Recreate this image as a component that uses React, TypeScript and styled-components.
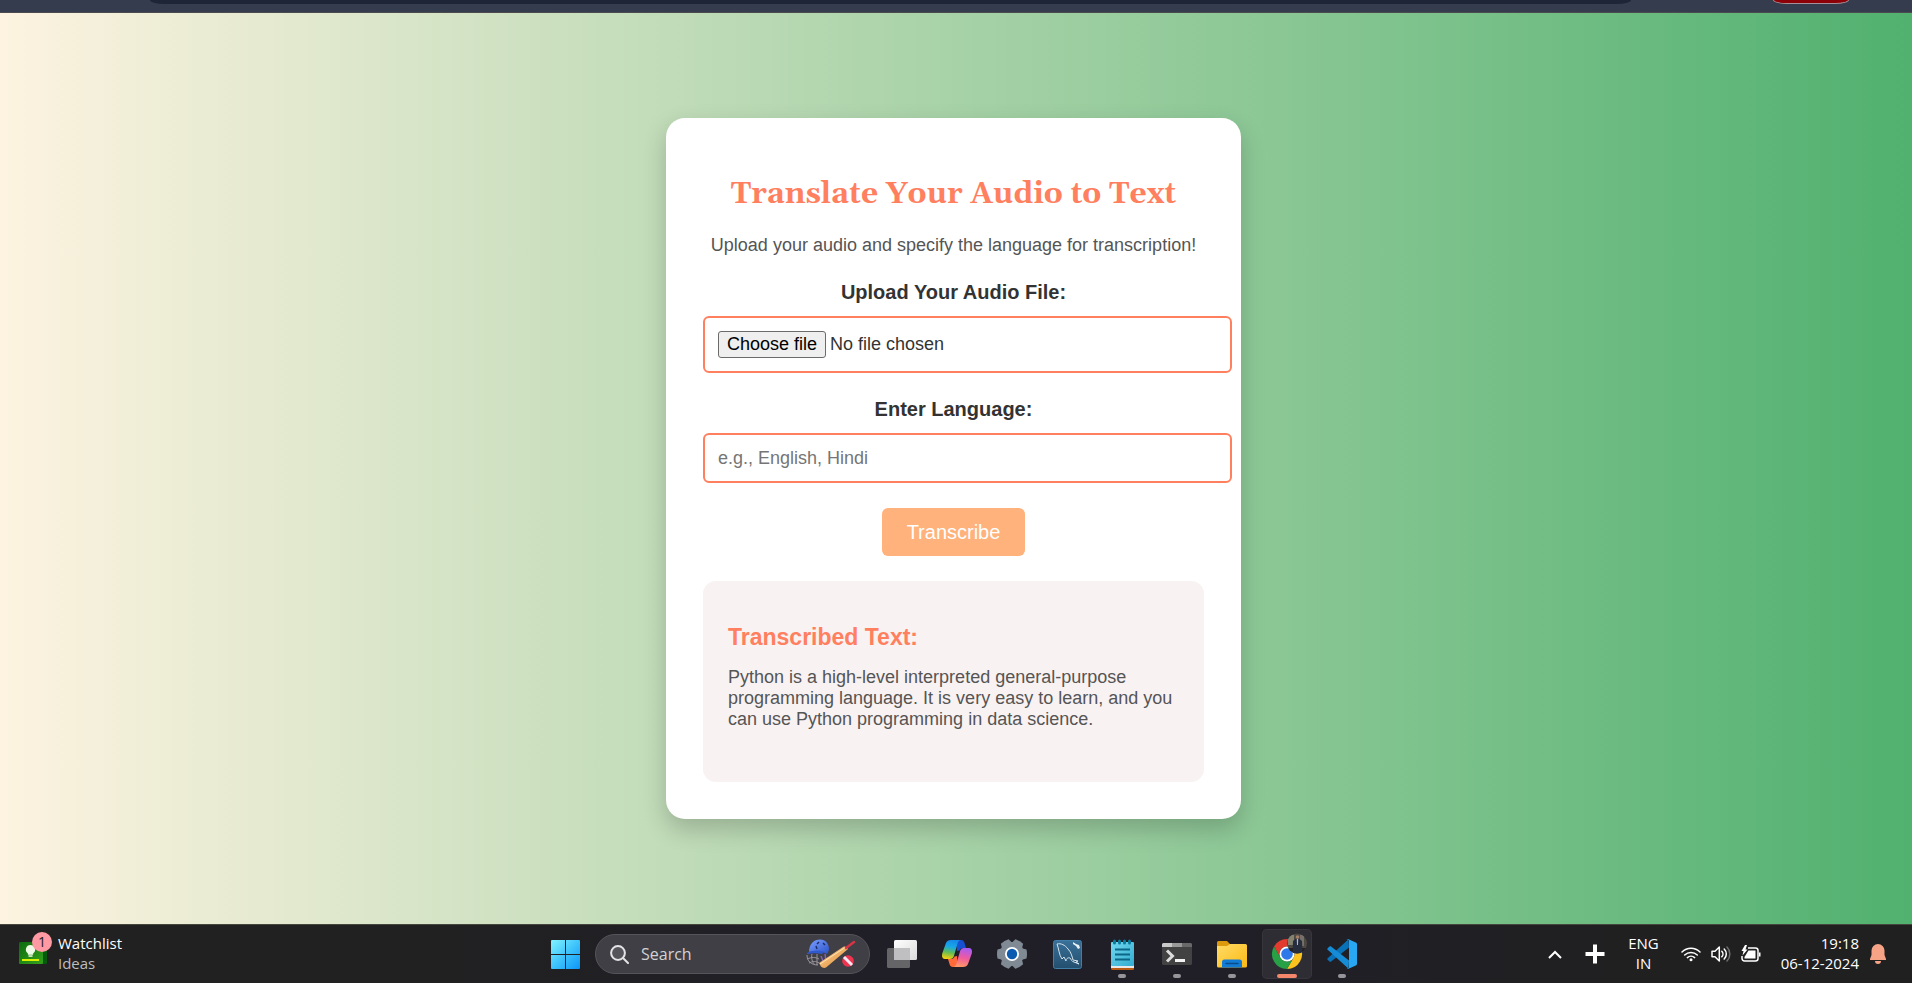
import React, { useRef, useState } from "react";
import styled, { createGlobalStyle } from "styled-components";

const GlobalStyle = createGlobalStyle`
  *, *::before, *::after { box-sizing: border-box; }
  body { margin: 0; font-family: "Liberation Sans", Arial, sans-serif; }
  h1, h2, p { margin: 0; }
  button, input { font-family: inherit; }
`;

const Screen = styled.div`
  display: flex;
  flex-direction: column;
  min-height: 100vh;
`;

/* ---------- browser chrome ---------- */

const BrowserBar = styled.div`
  display: flex;
  align-items: flex-start;
  height: 13px;
  padding: 0 63px 0 150px;
  background: #343c4e;
  border-bottom: 1px solid #4b4a4f;
`;

const AddressBar = styled.div`
  flex: 1;
  height: 4px;
  margin-right: 142px;
  background: #1d2536;
  border-radius: 0 0 14px 14px / 0 0 4px 4px;
`;

const UpdatePill = styled.div`
  width: 76px;
  height: 4px;
  background: #8c0007;
  border: 1px solid #a58f98;
  border-top: 0;
  border-radius: 0 0 14px 14px / 0 0 4px 4px;
`;

/* ---------- page ---------- */

const Page = styled.main`
  flex: 1;
  display: flex;
  align-items: center;
  justify-content: center;
  padding: 24px 5px 24px 0;
  background: linear-gradient(to right, #fdf3e0, #51b16f);
`;

const Card = styled.section`
  width: 575px;
  padding: 37px;
  background: #fff;
  border-radius: 19px;
  box-shadow: 0 10px 25px rgba(0, 0, 0, 0.2);
  text-align: center;
`;

const Title = styled.h1`
  margin: 22px 0 24px;
  color: #ff7f5f;
  font: bold 30px/34px Georgia, Gelasio, "Liberation Serif", serif;
  white-space: nowrap;
`;

const Intro = styled.p`
  margin-bottom: 24px;
  color: #555;
  font-size: 18px;
  line-height: 21px;
`;

const Form = styled.form`
  display: flex;
  flex-direction: column;
  align-items: center;
`;

const FieldLabel = styled.label`
  margin-bottom: 12px;
  color: #333;
  font-size: 20px;
  font-weight: bold;
  line-height: 24px;
`;

const fieldWidth = "calc(100% + 28px)";

const FileField = styled.div`
  display: flex;
  align-items: center;
  align-self: flex-start;
  gap: 4px;
  width: ${fieldWidth};
  margin-bottom: 24px;
  padding: 13px;
  border: 2px solid #ff7f5f;
  border-radius: 6px;
  color: #333;
  font-size: 18px;
  line-height: 21px;
`;

const HiddenFileInput = styled.input`
  display: none;
`;

const ChooseButton = styled.button`
  height: 27px;
  padding: 0 8px;
  background: #efefef;
  border: 1px solid #6b6b6b;
  border-radius: 3px;
  color: #000;
  font-size: 18px;
  line-height: 21px;
`;

const TextField = styled.input`
  align-self: flex-start;
  width: ${fieldWidth};
  height: 50px;
  margin-bottom: 25px;
  padding: 0 13px;
  background: #fff;
  border: 2px solid #ff7f5f;
  border-radius: 6px;
  color: #333;
  font-size: 18px;
  &::placeholder { color: #757575; }
`;

const SubmitButton = styled.button`
  height: 48px;
  margin-bottom: 25px;
  padding: 0 25px;
  background: #ffb27b;
  border: 0;
  border-radius: 6px;
  color: #fff;
  font-size: 20px;
`;

const Result = styled.section`
  min-height: 201px;
  padding: 25px;
  background: #f9f2f2;
  border-radius: 13px;
  text-align: left;
`;

const ResultTitle = styled.h2`
  margin: 18px 0 16px;
  color: #ff7f5f;
  font-size: 23px;
  line-height: 27px;
`;

const ResultText = styled.p`
  color: #555;
  font-size: 18px;
  line-height: 21px;
`;

/* ---------- taskbar ---------- */

const Taskbar = styled.footer`
  display: grid;
  grid-template-columns: 1fr auto 1fr;
  align-items: center;
  height: 59px;
  padding-right: 5px;
  background: linear-gradient(to right, #212121 20%, #201f27 45%, #201f27 65%, #202021 85%);
  border-top: 1px solid #45473f;
  color: #fff;
  font-family: "Segoe UI", "Open Sans", sans-serif;
  font-size: 15px;
  line-height: 20px;
`;

const BareButton = styled.button`
  display: flex;
  align-items: center;
  padding: 0;
  background: none;
  border: 0;
  color: inherit;
  font: inherit;
`;

const Widget = styled(BareButton)`
  justify-self: start;
  gap: 6px;
  margin-left: 18px;
  text-align: left;
`;

const Stack = styled.span`
  display: block;
  padding-bottom: 3px;
`;

const Muted = styled.span`
  display: block;
  color: #bdbdbd;
`;

const Line = styled.span`
  display: block;
`;

const Apps = styled.nav`
  display: flex;
  align-items: center;
  gap: 5px;
`;

const AppButton = styled(BareButton)<{ $active?: boolean; $running?: boolean }>`
  position: relative;
  justify-content: center;
  width: 50px;
  height: 50px;
  border-radius: 5px;
  background: ${(p) => (p.$active ? "#2e2d34" : "none")};
  box-shadow: ${(p) => (p.$active ? "inset 0 0 0 1px #37363c" : "none")};
  &::after {
    content: "";
    display: ${(p) => (p.$running ? "block" : "none")};
    position: absolute;
    bottom: 1px;
    left: 50%;
    transform: translateX(-50%);
    width: ${(p) => (p.$active ? "20px" : "8px")};
    height: 4px;
    border-radius: 2px;
    background: ${(p) => (p.$active ? "#f4866c" : "#96959a")};
  }
`;

const SearchBox = styled.label`
  display: flex;
  align-items: center;
  gap: 12px;
  width: 275px;
  height: 40px;
  margin-right: 2px;
  padding: 0 13px 0 14px;
  background: #403f45;
  border: 1px solid #55545a;
  border-radius: 20px;
`;

const SearchInput = styled.input`
  flex: 1;
  min-width: 0;
  padding: 0;
  background: none;
  border: 0;
  color: #fff;
  font-size: 16px;
  &::placeholder { color: #d2d2d4; opacity: 1; }
`;

const Tray = styled.div`
  display: flex;
  align-items: center;
  justify-self: end;
  margin-right: 21px;
`;

const TrayButton = styled(BareButton)<{ $gap: number }>`
  margin-right: ${(p) => p.$gap}px;
`;

const Language = styled(TrayButton)`
  text-align: center;
`;

const Clock = styled(TrayButton)`
  text-align: right;
`;

const Quick = styled(TrayButton)`
  gap: 10px;
`;

/* ---------- icons ---------- */

const WatchIcon = () => (
  <svg width="34" height="44" viewBox="0 2 34 44">
    <defs>
      <linearGradient id="wg" x1="0" y1="0" x2="1" y2="1">
        <stop offset="0" stopColor="#0c6a0f" />
        <stop offset="1" stopColor="#35a31c" />
      </linearGradient>
    </defs>
    <rect x="1" y="12" width="28" height="22" rx="1.5" fill="#075b0c" />
    <rect x="1" y="12" width="24" height="22" rx="1.5" fill="url(#wg)" />
    <rect x="4" y="29" width="17" height="2" fill="#d9f000" />
    <path d="M12.500 15a4.600 4.600 0 0 1 2.600 8.400v1.300h-5.200v-1.300a4.600 4.600 0 0 1 2.600-8.400z" fill="#effbe6" />
    <rect x="10.500" y="25.300" width="4" height="1.500" fill="#effbe6" />
    <circle cx="24" cy="12" r="10" fill="#ff99a4" />
    <text x="24" y="17" textAnchor="middle" fontSize="14" fill="#1b1b1b">1</text>
  </svg>
);

const WindowsIcon = () => (
  <svg width="29" height="29" viewBox="0 0 29 29">
    <defs>
      <linearGradient id="win" gradientUnits="userSpaceOnUse" x1="0" y1="0" x2="29" y2="29">
        <stop offset="0" stopColor="#82f3ff" />
        <stop offset="0.500" stopColor="#3fc4fb" />
        <stop offset="1" stopColor="#0c95f8" />
      </linearGradient>
    </defs>
    <path d="M1 0h13v14H0V1a1 1 0 0 1 1-1zM15 0h13a1 1 0 0 1 1 1v13H15zM0 15h14v14H1a1 1 0 0 1-1-1zM15 15h14v13a1 1 0 0 1-1 1H15z" fill="url(#win)" />
  </svg>
);

const SearchIcon = () => (
  <svg width="19" height="19" viewBox="0 0 19 19" fill="none" stroke="#e4e4e6" strokeWidth="2">
    <circle cx="8" cy="8" r="6.900" fill="#55545a" />
    <path d="M13 13l5 5" strokeLinecap="round" />
  </svg>
);

const CricketIcon = () => (
  <svg width="50" height="30" viewBox="0 0 50 30">
    <defs>
      <linearGradient id="helmet" x1="0" y1="0" x2="1" y2="1">
        <stop offset="0" stopColor="#7ca0ff" />
        <stop offset="1" stopColor="#2b52c9" />
      </linearGradient>
      <linearGradient id="bat" x1="0" y1="0" x2="1" y2="1">
        <stop offset="0" stopColor="#ffd391" />
        <stop offset="1" stopColor="#dd8c3b" />
      </linearGradient>
    </defs>
    <g fill="none" stroke="#99979d" strokeWidth="1">
      <path d="M1 16c0 6 4 10 11 10M1 20c5-2 8-2 12 0M3 24c4-2 7-2 10 0M6 15c-1 4 0 8 3 11M11 15v11" />
    </g>
    <path d="M3 13C3 5 8 0.500 14 0.500s9 4.500 9 10.500l-2 4-4-2c-5-1-10-1-14 0z" fill="url(#helmet)" />
    <path d="M1 14c6-3 12-3 17-1l-2 2c-5-1-9-1-15 0z" fill="#3159cf" />
    <path d="M11 5l2-2M10 7l1 3M17 4l2 2" stroke="#1c2f68" strokeWidth="1.500" />
    <path d="M19 15l1 7M15 17l2 5" stroke="#7f61bb" strokeWidth="1.500" />
    <path d="M13 24L37 8c2-1 4 0 5 2L20 28.500c-2 1-4 0-5-1z" fill="url(#bat)" />
    <path d="M14 25L39 8.500" stroke="#ffe4b4" strokeWidth="1" />
    <path d="M40 9l8-6" stroke="#d83446" strokeWidth="2.500" strokeLinecap="round" />
    <circle cx="42" cy="22" r="5.800" fill="#ee3450" />
    <path d="M38 18l8 8" stroke="#f6e7f0" strokeWidth="3" />
  </svg>
);

const TaskViewIcon = () => (
  <svg width="30" height="29" viewBox="0 0 30 29">
    <defs>
      <linearGradient id="tv" x1="0" y1="0" x2="1" y2="1">
        <stop offset="0" stopColor="#fff" />
        <stop offset="1" stopColor="#dadada" />
      </linearGradient>
    </defs>
    <rect x="0" y="8" width="23" height="20" rx="1.500" fill="#656567" />
    <rect x="7" y="0" width="23" height="20" rx="1.500" fill="url(#tv)" />
    <path d="M7 8h16v12H8.500A1.500 1.500 0 0 1 7 18.500z" fill="#bfbfc1" />
  </svg>
);

const CopilotIcon = () => (
  <svg width="30" height="28" viewBox="0 0 30 28">
    <defs>
      <linearGradient id="cpa" x1="0.500" y1="0" x2="0.300" y2="1">
        <stop offset="0" stopColor="#1689e8" />
        <stop offset="0.350" stopColor="#18a8e8" />
        <stop offset="0.650" stopColor="#62bd55" />
        <stop offset="1" stopColor="#f8d00f" />
      </linearGradient>
      <linearGradient id="cpb" x1="0.600" y1="0" x2="0.400" y2="1">
        <stop offset="0" stopColor="#a65cf5" />
        <stop offset="0.500" stopColor="#ee5aa0" />
        <stop offset="1" stopColor="#ff9866" />
      </linearGradient>
    </defs>
    <path d="M14 0h5c2 0 3 1 3.500 3L24 8h-3.500c-1.500 0-2.500 1-3 2.500L15 11z" fill="#1751d1" />
    <path d="M16 27h-5c-2 0-3-1-3.500-3L6 19h3.500c1.500 0 2.500-1 3-2.500L15 16z" fill="#ff6a3b" />
    <path d="M9 0h10c-2.200 0-3 2-3.600 4l-3.500 12c-.6 2-1.900 3-3.900 3H3c-3 0-3.500-3-2.600-6L4 3c.7-2 2.500-3 5-3z" fill="url(#cpa)" />
    <path d="M21 27H11c2.200 0 3-2 3.600-4l3.500-12c.6-2 1.900-3 3.900-3h5c3 0 3.500 3 2.600 6L26 24c-.7 2-2.500 3-5 3z" fill="url(#cpb)" />
  </svg>
);

const GearIcon = () => (
  <svg width="30" height="30" viewBox="-15 -15 30 30">
    <g fill="#808a94">
      <circle r="12" />
      {[0, 60, 120, 180, 240, 300].map((a) => (
        <path key={a} transform={`rotate(${a})`} d="M9 -6L14.500 -4.500Q15.500 0 14.500 4.500L9 6z" />
      ))}
    </g>
    <circle r="7" fill="#fff" />
    <circle r="5.200" fill="#0b5cb0" />
  </svg>
);

const DolphinIcon = () => (
  <svg width="29" height="29" viewBox="0 0 29 29">
    <defs>
      <linearGradient id="sql" x1="0" y1="0" x2="0" y2="1">
        <stop offset="0" stopColor="#3a7099" />
        <stop offset="1" stopColor="#234f6e" />
      </linearGradient>
    </defs>
    <rect x="0.500" y="0.500" width="28" height="28" rx="2" fill="url(#sql)" stroke="#3f7fa8" />
    <path d="M4 4c4-1 8 1 11 5 3 3 4 7 5 11l5 1-2 1 3 2-5-2c-2 0-3-3-4-4-2-1-4 1-4 3l-2-4-2 2C6 15 6 9 4 4z" fill="none" stroke="#d5e4ec" strokeWidth="1" />
    <path d="M20 2l3 2 3 1 1 3-2 1-2-3-3-2z" fill="#e9f1f5" />
  </svg>
);

const NotepadIcon = () => (
  <svg width="30" height="31" viewBox="0 0 30 31">
    <defs>
      <linearGradient id="np" x1="0" y1="0" x2="1" y2="1">
        <stop offset="0" stopColor="#72d8f0" />
        <stop offset="1" stopColor="#32acd0" />
      </linearGradient>
    </defs>
    <rect x="4" y="20" width="23" height="11" rx="1.500" fill="#b65a14" />
    <rect x="4" y="20" width="23" height="9" fill="#e8e8e8" />
    <rect x="4" y="3" width="23" height="24" rx="1" fill="url(#np)" />
    <path d="M8 10.500h15M8 15.500h15M8 20.500h15" stroke="#0c6685" strokeWidth="2" />
    <path d="M7.500 2v2M12.500 2v2M17.500 2v2M22.500 2v2" stroke="#0b7a9b" strokeWidth="3" strokeLinecap="round" />
  </svg>
);

const TerminalIcon = () => (
  <svg width="30" height="24" viewBox="0 0 30 24">
    <rect y="1" width="30" height="22" rx="1.500" fill="#424242" />
    <path d="M1.500 1H10v4H0V2.500A1.500 1.500 0 0 1 1.500 1z" fill="#c9c9c9" />
    <path d="M10 1h10v4H10z" fill="#999" />
    <path d="M20 1h8.500A1.500 1.500 0 0 1 30 2.500V5H20z" fill="#696969" />
    <path d="M5 8.500l5.500 5.500L5 19.500" fill="none" stroke="#dcdcdc" strokeWidth="3" />
    <rect x="13" y="17" width="10" height="3" fill="#f2f2f2" />
  </svg>
);

const FolderIcon = () => (
  <svg width="30" height="27" viewBox="0 0 30 27">
    <defs>
      <linearGradient id="fd" x1="0" y1="0" x2="1" y2="1">
        <stop offset="0" stopColor="#ffdc68" />
        <stop offset="1" stopColor="#fcb913" />
      </linearGradient>
    </defs>
    <path d="M0 1.500A1.500 1.500 0 0 1 1.500 0H10l3 3v3H0z" fill="#dc9a0c" />
    <path d="M0 5h10l3-2h15.500A1.500 1.500 0 0 1 30 4.500V25a1.500 1.500 0 0 1-1.500 1.500h-27A1.500 1.500 0 0 1 0 25z" fill="url(#fd)" />
    <path d="M5 26.500V21a2.500 2.500 0 0 1 2.500-2.500h15A2.500 2.500 0 0 1 25 21v5.500z" fill="#127bd3" />
    <path d="M9 22.500h12" stroke="#0b4b8b" strokeWidth="1.500" strokeLinecap="round" />
  </svg>
);

const ChromeIcon = () => (
  <svg width="42" height="42" viewBox="0 0 42 42">
    <defs>
      <clipPath id="avatar">
        <circle cx="28" cy="10.500" r="10" />
      </clipPath>
    </defs>
    <g transform="translate(21 21)">
      <path d="M-13 -7.500A15 15 0 0 1 13 -7.500H0A7.500 7.500 0 0 0 -6.500 3.750z" fill="#e33b2e" />
      <path d="M13 -7.500A15 15 0 0 1 0 15L6.500 3.750A7.500 7.500 0 0 0 0 -7.500z" fill="#fcc31e" />
      <path d="M0 15A15 15 0 0 1 -13 -7.500L-6.500 3.750A7.500 7.500 0 0 0 6.500 3.750z" fill="#28a046" />
      <circle r="7.500" fill="#fff" />
      <circle r="5.800" fill="#2f78ea" />
    </g>
    <g transform="translate(3 0)" clipPath="url(#avatar)">
      <rect x="18" width="20" height="21" fill="#4d4a43" />
      <rect x="19" y="2" width="6" height="10" fill="#85836f" />
      <rect x="31" y="2" width="4" height="11" fill="#77706a" />
      <rect x="18" y="15" width="20" height="6" fill="#24211f" />
      <path d="M24 8l2.500-2h4L33 8l.5 12h-10z" fill="#252d3f" />
      <path d="M27.800 6h1.400l-.2 6h-1z" fill="#b4b8c5" />
      <circle cx="28.500" cy="4" r="1.800" fill="#a67d67" />
    </g>
  </svg>
);

const CodeIcon = () => (
  <svg width="30" height="30" viewBox="0 0 30 30">
    <path d="M21.500 0.200L.7 19.300a1 1 0 0 0 0 1.500l1.800 1.700c.5.400 1.100.4 1.600.1L22 8.500z" fill="#0871b8" />
    <path d="M.7 10.700a1 1 0 0 1 0-1.500l1.800-1.700c.5-.4 1.100-.4 1.600-.1L22 21.500l-.5 8.300z" fill="#168bd6" />
    <path d="M21.500 29.800c-.8.300-1.600.1-2.200-.5.700.7 2.700.2 2.700-1V1.700c0-1.200-2-1.700-2.700-1 .6-.6 1.400-.8 2.200-.5l7.300 3.200c.7.400 1.200 1 1.200 1.800v19.600c0 .8-.5 1.400-1.200 1.800z" fill="#28a8f2" />
  </svg>
);

const ChevronIcon = () => (
  <svg width="14" height="9" viewBox="0 0 14 9">
    <path d="M1 8l6-6 6 6" fill="none" stroke="#fff" strokeWidth="2" />
  </svg>
);

const PlusIcon = () => (
  <svg width="20" height="20" viewBox="0 0 20 20">
    <path d="M10 0.500v19M0.500 10h19" stroke="#fff" strokeWidth="4" />
  </svg>
);

const WifiIcon = () => (
  <svg width="20" height="16" viewBox="0 0 20 16" fill="none" stroke="#fff" strokeWidth="1.500" strokeLinecap="round">
    <path d="M1 6a12.600 12.600 0 0 1 18 0M3.700 9a8.900 8.900 0 0 1 12.600 0M6.400 11.600a5.200 5.200 0 0 1 7.200 0" />
    <circle cx="10" cy="13.700" r="1.500" fill="#fff" stroke="none" />
  </svg>
);

const SpeakerIcon = () => (
  <svg width="20" height="18" viewBox="0 0 20 18" fill="none" stroke="#fff" strokeWidth="1.500" strokeLinecap="round" strokeLinejoin="round">
    <path d="M1 6.200h3L8.300 2v14L4 11.800H1z" />
    <path d="M10.800 6.200a4 4 0 0 1 0 5.600M13.200 4a7 7 0 0 1 0 10" />
    <path d="M16 2a10 10 0 0 1 0 14" stroke="#6e6e6e" />
  </svg>
);

const BatteryIcon = () => (
  <svg width="20" height="18" viewBox="0 0 20 18">
    <path d="M7 3h7.500A2.500 2.500 0 0 1 17 5.500v8a2.500 2.500 0 0 1-2.500 2.500h-11A2.500 2.500 0 0 1 1 13.500V11" fill="none" stroke="#fff" strokeWidth="1.500" />
    <path d="M18 7.500h1.500v4H18z" fill="#fff" />
    <path d="M7.500 5.500H14.500v8H3.500V12z" fill="#fff" />
    <path d="M4 0L0.500 6h2L1.500 10.500 6.500 4.500H4.500L6 0z" fill="#fff" />
  </svg>
);

const BellIcon = () => (
  <svg width="16" height="20" viewBox="0 0 16 20" fill="#f7a386">
    <path d="M8 0a6.500 6.500 0 0 1 6.500 6.500V11L16 15v1H0v-1l1.500-4V6.500A6.500 6.500 0 0 1 8 0zM5 17h6a3 3 0 0 1-6 0z" />
  </svg>
);

const apps = [
  { name: "Task View", icon: <TaskViewIcon /> },
  { name: "Copilot", icon: <CopilotIcon /> },
  { name: "Settings", icon: <GearIcon /> },
  { name: "MySQL Workbench", icon: <DolphinIcon /> },
  { name: "Notepad", icon: <NotepadIcon />, running: true },
  { name: "Terminal", icon: <TerminalIcon />, running: true },
  { name: "File Explorer", icon: <FolderIcon />, running: true },
  { name: "Google Chrome", icon: <ChromeIcon />, running: true, active: true },
  { name: "Visual Studio Code", icon: <CodeIcon />, running: true },
];

export default function App() {
  const fileRef = useRef<HTMLInputElement>(null);
  const [fileName, setFileName] = useState("No file chosen");

  return (
    <Screen>
      <GlobalStyle />
      <BrowserBar>
        <AddressBar />
        <UpdatePill />
      </BrowserBar>

      <Page>
        <Card>
          <Title>Translate Your Audio to Text</Title>
          <Intro>Upload your audio and specify the language for transcription!</Intro>
          <Form onSubmit={(e) => e.preventDefault()}>
            <FieldLabel htmlFor="audio">Upload Your Audio File:</FieldLabel>
            <FileField>
              <HiddenFileInput
                ref={fileRef}
                id="audio"
                type="file"
                accept="audio/*"
                onChange={(e) => setFileName(e.target.files?.[0]?.name ?? "No file chosen")}
              />
              <ChooseButton type="button" onClick={() => fileRef.current?.click()}>
                Choose file
              </ChooseButton>
              <span>{fileName}</span>
            </FileField>
            <FieldLabel htmlFor="language">Enter Language:</FieldLabel>
            <TextField id="language" type="text" placeholder="e.g., English, Hindi" />
            <SubmitButton type="submit">Transcribe</SubmitButton>
          </Form>
          <Result>
            <ResultTitle>Transcribed Text:</ResultTitle>
            <ResultText>
              Python is a high-level interpreted general-purpose programming language. It is very
              easy to learn, and you can use Python programming in data science.
            </ResultText>
          </Result>
        </Card>
      </Page>

      <Taskbar>
        <Widget>
          <WatchIcon />
          <Stack>
            <Line>Watchlist</Line>
            <Muted>Ideas</Muted>
          </Stack>
        </Widget>
        <Apps>
          <AppButton aria-label="Start">
            <WindowsIcon />
          </AppButton>
          <SearchBox>
            <SearchIcon />
            <SearchInput type="text" placeholder="Search" aria-label="Search" />
            <CricketIcon />
          </SearchBox>
          {apps.map((app) => (
            <AppButton key={app.name} aria-label={app.name} $running={app.running} $active={app.active}>
              {app.icon}
            </AppButton>
          ))}
        </Apps>
        <Tray>
          <TrayButton $gap={23} aria-label="Show hidden icons">
            <ChevronIcon />
          </TrayButton>
          <TrayButton $gap={23} aria-label="Add">
            <PlusIcon />
          </TrayButton>
          <Language $gap={22}>
            <Stack>
              <Line>ENG</Line>
              <Line>IN</Line>
            </Stack>
          </Language>
          <Quick $gap={20} aria-label="Network, volume and battery">
            <WifiIcon />
            <SpeakerIcon />
            <BatteryIcon />
          </Quick>
          <Clock $gap={11}>
            <Stack>
              <Line>19:18</Line>
              <Line>06-12-2024</Line>
            </Stack>
          </Clock>
          <BareButton aria-label="Notifications">
            <BellIcon />
          </BareButton>
        </Tray>
      </Taskbar>
    </Screen>
  );
}
